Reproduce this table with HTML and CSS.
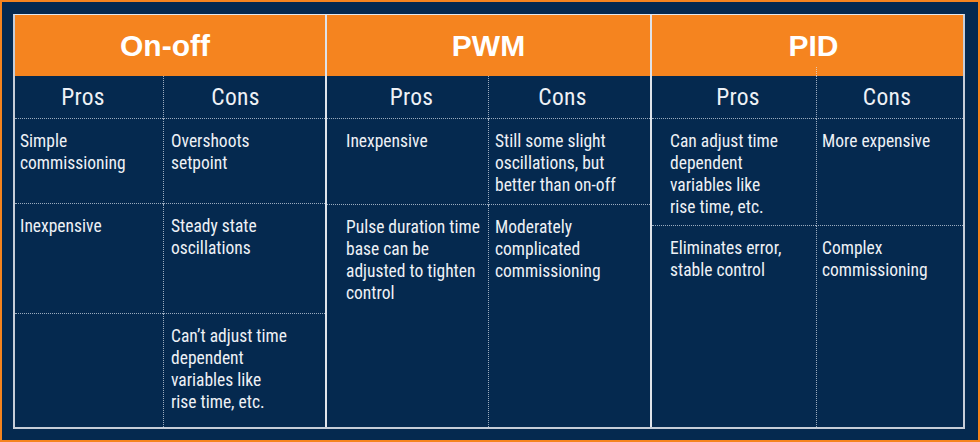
FILE: index.html
```html
<!DOCTYPE html>
<html lang="en">
<head>
<meta charset="utf-8">
<title>Control methods comparison</title>
<link rel="stylesheet" href="styles.css">
</head>
<body>
<div class="frame">
  <div class="table">
    <section class="group onoff">
      <h2 class="title">On-off</h2>
      <div class="grid">
        <div class="sub pros">Pros</div>
        <div class="sub cons">Cons</div>
        <div class="cell pros r1">Simple<br>commissioning</div>
        <div class="cell cons r1">Overshoots<br>setpoint</div>
        <div class="cell pros r2">Inexpensive</div>
        <div class="cell cons r2">Steady state<br>oscillations</div>
        <div class="cell pros last"></div>
        <div class="cell cons last">Can’t adjust time<br>dependent<br>variables like<br>rise time, etc.</div>
      </div>
    </section>
    <section class="group pwm">
      <h2 class="title">PWM</h2>
      <div class="grid">
        <div class="sub pros">Pros</div>
        <div class="sub cons">Cons</div>
        <div class="cell pros r1">Inexpensive</div>
        <div class="cell cons r1">Still some slight<br>oscillations, but<br>better than on-off</div>
        <div class="cell pros last">Pulse duration time<br>base can be<br>adjusted to tighten<br>control</div>
        <div class="cell cons last">Moderately<br>complicated<br>commissioning</div>
      </div>
    </section>
    <section class="group pid">
      <h2 class="title">PID</h2>
      <div class="grid">
        <div class="sub pros">Pros</div>
        <div class="sub cons">Cons</div>
        <div class="cell pros r1">Can adjust time<br>dependent<br>variables like<br>rise time, etc.</div>
        <div class="cell cons r1">More expensive</div>
        <div class="cell pros last">Eliminates error,<br>stable control</div>
        <div class="cell cons last">Complex<br>commissioning</div>
      </div>
    </section>
  </div>
</div>
</body>
</html>
```

FILE: styles.css
```css
* { box-sizing: border-box; }

html, body {
  margin: 0;
  padding: 0;
  background: #05294f;
}

.frame {
  width: 980px;
  height: 442px;
  border: 2px solid #f5841f;
  background: #05294f;
  padding: 12px 13px 11px 11px;
}

.table {
  height: 415px;
  border: 2px solid #c6cdd8;
  border-top-width: 1px;
  border-top-color: #e4e8ee;
  display: grid;
  grid-template-columns: 312px 325px 1fr;
}

.group {
  display: flex;
  flex-direction: column;
  min-width: 0;
}

.onoff, .pwm {
  border-right: 2px solid #dfe3ea;
}

.title {
  position: relative;
  margin: 0;
  height: 61px;
  line-height: 61px;
  background: #f5841f;
  color: #ffffff;
  font-family: "Liberation Sans", Arial, sans-serif;
  font-weight: 700;
  font-size: 30px;
  text-align: center;
}

.onoff .title { padding-right: 10px; }
.pid .title { padding-left: 12px; }

.grid {
  flex: 1;
  display: grid;
  font-family: "Roboto Condensed", "DejaVu Sans Condensed", sans-serif;
  color: #eef1f6;
}

.onoff .grid { grid-template-columns: 148px 1fr; grid-template-rows: 43px 85px 110px 1fr; }
.pwm .grid { grid-template-columns: 161px 1fr; grid-template-rows: 43px 86px 1fr; }
.pid .grid { grid-template-columns: 164px 1fr; grid-template-rows: 43px 107px 1fr; }

.pid .title::after {
  content: "";
  position: absolute;
  left: 164px;
  bottom: 0;
  height: 9px;
  border-left: 1px dotted rgba(220, 228, 240, 0.7);
}

.sub, .r1, .r2 {
  border-bottom: 1px dotted rgba(220, 228, 240, 0.7);
}

.cons {
  border-left: 1px dotted rgba(220, 228, 240, 0.7);
}

.sub {
  font-size: 23.5px;
  letter-spacing: 0.3px;
  line-height: 42px;
  text-align: center;
}

.cell {
  font-size: 17.5px;
  line-height: 22px;
  padding: 11px 4px 0 7px;
  white-space: nowrap;
}

.onoff .sub.pros { padding-right: 12px; }
.onoff .sub.cons { padding-right: 18px; }
.pwm .sub.pros { padding-left: 8px; }
.pwm .sub.cons { padding-right: 14px; }
.pid .sub.pros { padding-left: 8px; }
.pid .sub.cons { padding-right: 6px; }

.onoff .cell.pros { padding-left: 5px; }
.onoff .cell.cons { padding-left: 7px; }
.pwm .cell.pros { padding-left: 19px; }
.pwm .cell.cons { padding-left: 6px; }
.pid .cell.pros { padding-left: 18px; }
.pid .cell.cons { padding-left: 5px; }
```
